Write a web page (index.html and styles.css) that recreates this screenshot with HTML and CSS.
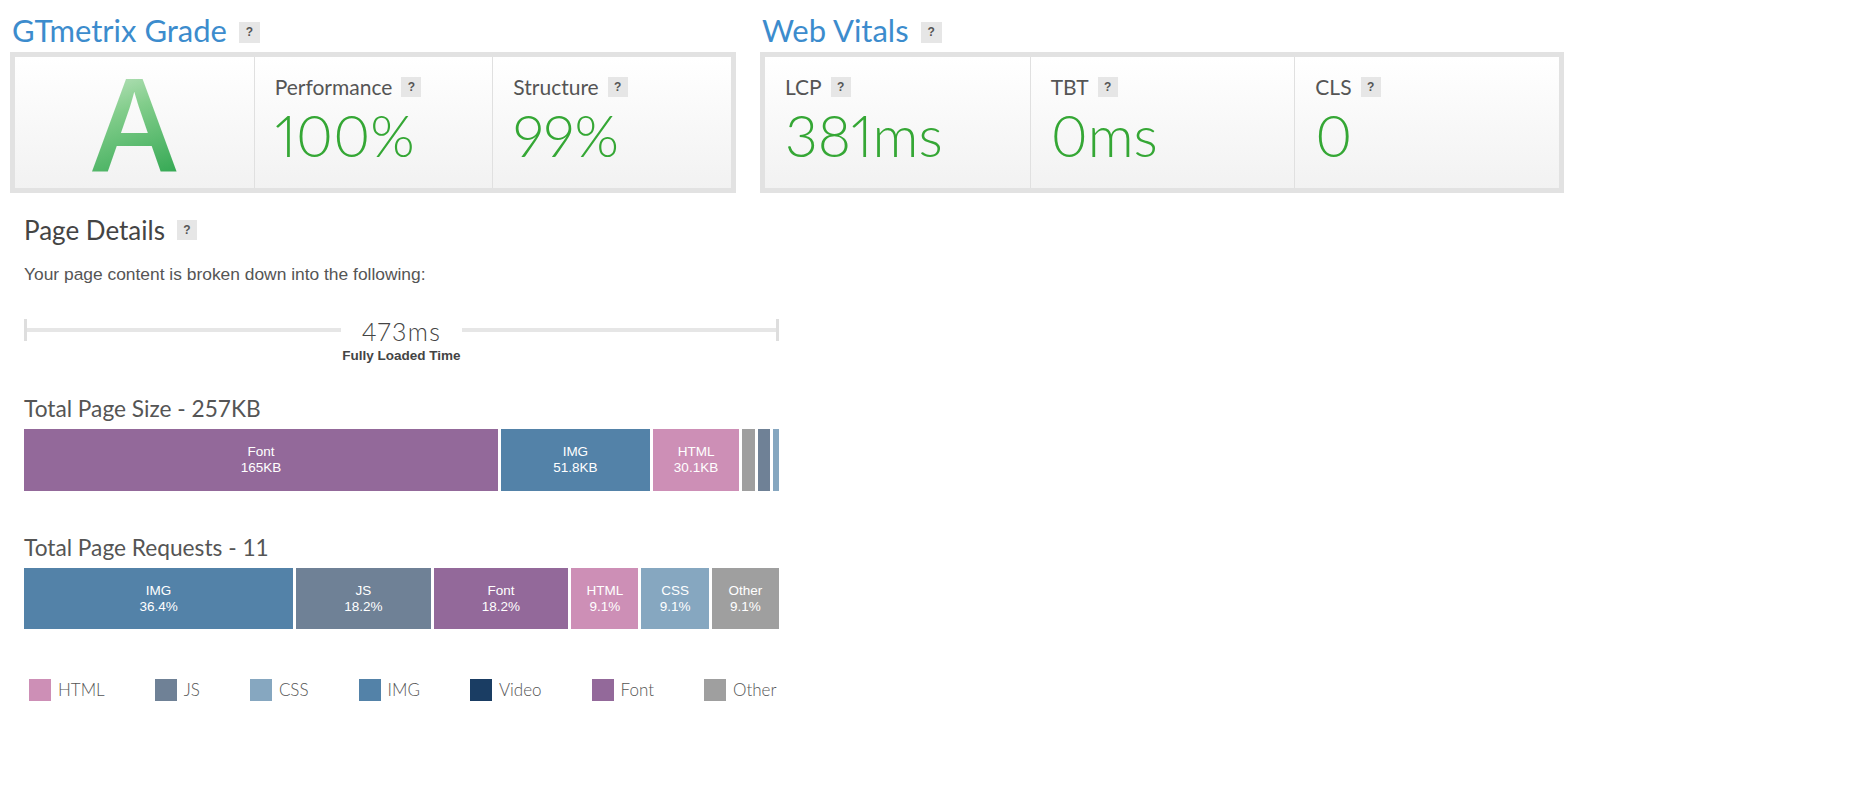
FILE: index.html
```html
<!DOCTYPE html>
<html>
<head>
<meta charset="utf-8">
<title>GTmetrix Report</title>
<link rel="stylesheet" href="styles.css">
</head>
<body>
<div class="page">
  <div class="top">
    <section class="panel grade-panel">
      <h2 class="panel-title">GTmetrix Grade <span class="help help-lg">?</span></h2>
      <div class="box">
        <div class="cell grade-cell"><span class="grade">A</span></div>
        <div class="cell">
          <div class="label">Performance <span class="help">?</span></div>
          <div class="value">100%</div>
        </div>
        <div class="cell">
          <div class="label">Structure <span class="help">?</span></div>
          <div class="value">99%</div>
        </div>
      </div>
    </section>
    <section class="panel vitals-panel">
      <h2 class="panel-title">Web Vitals <span class="help help-lg">?</span></h2>
      <div class="box">
        <div class="cell">
          <div class="label">LCP <span class="help">?</span></div>
          <div class="value">381ms</div>
        </div>
        <div class="cell">
          <div class="label">TBT <span class="help">?</span></div>
          <div class="value">0ms</div>
        </div>
        <div class="cell">
          <div class="label">CLS <span class="help">?</span></div>
          <div class="value">0</div>
        </div>
      </div>
    </section>
  </div>

  <section class="details">
    <h3 class="details-title">Page Details <span class="help">?</span></h3>
    <p class="desc">Your page content is broken down into the following:</p>

    <div class="timeline">
      <span class="tick"></span>
      <span class="line"></span>
      <div class="tl-label">
        <div class="tl-value">473ms</div>
        <div class="tl-caption">Fully Loaded Time</div>
      </div>
      <span class="line"></span>
      <span class="tick"></span>
    </div>

    <h4 class="bar-title">Total Page Size - 257KB</h4>
    <div class="bar">
      <div class="seg c-font" style="flex-grow:165"><span>Font</span><span>165KB</span></div>
      <div class="seg c-img" style="flex-grow:51.8"><span>IMG</span><span>51.8KB</span></div>
      <div class="seg c-html" style="flex-grow:30.1"><span>HTML</span><span>30.1KB</span></div>
      <div class="seg c-other" style="flex-grow:4.6"></div>
      <div class="seg c-js" style="flex-grow:4.1"></div>
      <div class="seg c-css" style="flex-grow:2"></div>
    </div>

    <h4 class="bar-title req-title">Total Page Requests - 11</h4>
    <div class="bar bar-req">
      <div class="seg c-img" style="flex-grow:4"><span>IMG</span><span>36.4%</span></div>
      <div class="seg c-js" style="flex-grow:2"><span>JS</span><span>18.2%</span></div>
      <div class="seg c-font" style="flex-grow:2"><span>Font</span><span>18.2%</span></div>
      <div class="seg c-html" style="flex-grow:1"><span>HTML</span><span>9.1%</span></div>
      <div class="seg c-css" style="flex-grow:1"><span>CSS</span><span>9.1%</span></div>
      <div class="seg c-other" style="flex-grow:1"><span>Other</span><span>9.1%</span></div>
    </div>

    <ul class="legend">
      <li><span class="swatch c-html"></span>HTML</li>
      <li><span class="swatch c-js"></span>JS</li>
      <li><span class="swatch c-css"></span>CSS</li>
      <li><span class="swatch c-img"></span>IMG</li>
      <li><span class="swatch c-video"></span>Video</li>
      <li><span class="swatch c-font"></span>Font</li>
      <li><span class="swatch c-other"></span>Other</li>
    </ul>
  </section>
</div>
</body>
</html>
```

FILE: styles.css
```css
* { box-sizing: border-box; }

body {
  margin: 0;
  background: #fff;
  font-family: Lato, "Open Sans", sans-serif;
  color: #555;
}

.page {
  padding: 12px 0 0 10px;
}

.top {
  display: flex;
  gap: 24px;
}

.grade-panel { width: 726px; }
.vitals-panel { width: 804px; }

.panel-title {
  margin: 0 0 4px 2px;
  height: 36px;
  display: flex;
  align-items: center;
  gap: 12px;
  font-size: 31px;
  line-height: 36px;
  font-weight: 400;
  color: #3c8ccd;
}

.help {
  display: inline-flex;
  align-items: center;
  justify-content: center;
  width: 20px;
  height: 20px;
  background: #e6e6e6;
  color: #555;
  font: bold 12px "Liberation Sans", Arial, sans-serif;
}

.help-lg {
  width: 21px;
  height: 21px;
  margin-top: 4px;
}

.box {
  display: grid;
  grid-template-columns: repeat(3, 1fr);
  height: 141px;
  border: 5px solid #e2e2e2;
}

.cell {
  min-width: 0;
  padding: 17px 0 0 20px;
  background: linear-gradient(#ffffff, #f2f2f2);
  border-left: 1px solid #e0e0e0;
}

.cell:first-child { border-left: 0; }

.label {
  display: flex;
  align-items: center;
  gap: 9px;
  font-size: 21px;
  line-height: 26px;
  color: #555;
}

.value {
  margin-top: 5px;
  font-size: 57px;
  line-height: 60px;
  font-weight: 300;
  font-variant-numeric: proportional-nums;
  color: #35a735;
}

.grade-cell {
  display: flex;
  align-items: center;
  justify-content: center;
  padding: 0;
}

.grade {
  font-family: "Open Sans", sans-serif;
  font-weight: 600;
  font-size: 128px;
  line-height: 1;
  background: linear-gradient(160deg, #d2ecd2 0%, #82cd8b 40%, #27a24a 100%);
  -webkit-background-clip: text;
  background-clip: text;
  color: transparent;
}

/* Page details */
.details {
  width: 755px;
  margin: 22px 0 0 14px;
}

.details-title {
  margin: 0;
  display: flex;
  align-items: center;
  gap: 12px;
  font-size: 26px;
  line-height: 30px;
  font-weight: 400;
  color: #444;
}

.desc {
  margin: 19px 0 0;
  font: 17.4px/20px "Liberation Sans", Arial, sans-serif;
  color: #555;
}

.timeline {
  display: flex;
  align-items: flex-start;
  margin-top: 34px;
}

.tick {
  width: 3px;
  height: 22px;
  margin-top: 1px;
  background: #dedede;
}

.line {
  flex: 1;
  height: 4px;
  margin-top: 10px;
  background: #e6e6e6;
}

.tl-label {
  text-align: center;
  padding: 0 1px;
}

.tl-value {
  font-size: 25px;
  line-height: 26px;
  font-weight: 300;
  letter-spacing: 1.4px;
  font-variant-numeric: proportional-nums;
  color: #444;
}

.tl-caption {
  margin-top: 4px;
  font: bold 13.5px/16px "Liberation Sans", Arial, sans-serif;
  color: #444;
}

.bar-title {
  margin: 32px 0 7px;
  font-size: 22.7px;
  line-height: 26px;
  font-weight: 400;
  color: #555;
}

.req-title {
  margin-top: 44px;
}

.bar {
  display: flex;
  gap: 3px;
  height: 62px;
}

.bar-req { height: 61px; }

.seg {
  flex-basis: 0;
  flex-shrink: 1;
  min-width: 0;
  display: flex;
  flex-direction: column;
  align-items: center;
  justify-content: center;
  overflow: hidden;
  white-space: nowrap;
  color: #fff;
  font: 13.5px/16px "Liberation Sans", Arial, sans-serif;
}

.c-font { background: #93699a; }
.c-img { background: #5382a8; }
.c-html { background: #cd8fb6; }
.c-other { background: #9f9f9f; }
.c-js { background: #6f8196; }
.c-css { background: #86a7c0; }
.c-video { background: #1a3d63; }

.legend {
  list-style: none;
  margin: 50px 0 0;
  padding: 0 0 0 5px;
  display: flex;
  gap: 50px;
}

.legend li {
  display: flex;
  align-items: center;
  gap: 7px;
  font-size: 17px;
  line-height: 22px;
  font-weight: 300;
  color: #555;
}

.swatch {
  width: 22px;
  height: 22px;
}
```
